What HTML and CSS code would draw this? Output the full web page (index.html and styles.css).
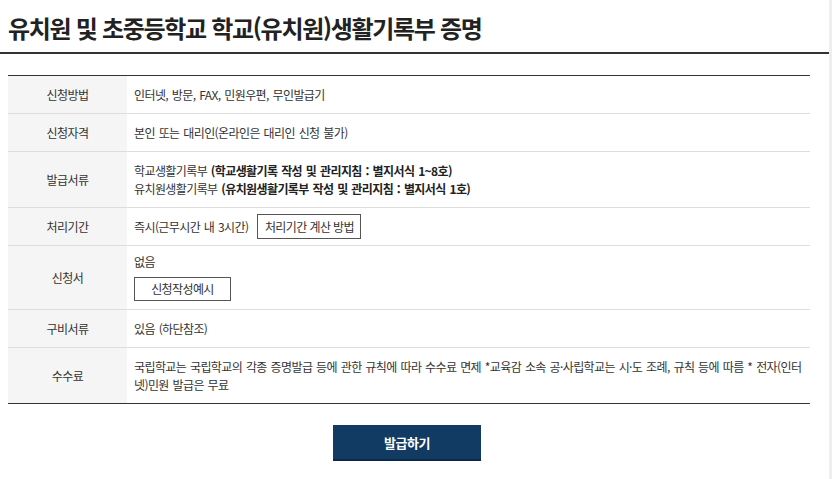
FILE: index.html
```html
<!DOCTYPE html>
<html lang="ko">
<head>
<meta charset="utf-8">
<link rel="stylesheet" href="styles.css">
</head>
<body>
<div class="page">
  <header class="head">
    <h1 class="title">유치원 및 초중등학교 학교(유치원)생활기록부 증명</h1>
  </header>
  <section class="body">
    <table class="info">
      <tr>
        <th>신청방법</th>
        <td>인터넷, 방문, FAX, 민원우편, 무인발급기</td>
      </tr>
      <tr>
        <th>신청자격</th>
        <td>본인 또는 대리인(온라인은 대리인 신청 불가)</td>
      </tr>
      <tr>
        <th>발급서류</th>
        <td>학교생활기록부 <b>(학교생활기록 작성 및 관리지침 : 별지서식 1~8호)</b><br>유치원생활기록부 <b>(유치원생활기록부 작성 및 관리지침 : 별지서식 1호)</b></td>
      </tr>
      <tr>
        <th>처리기간</th>
        <td class="tight"><div class="inline">즉시(근무시간 내 3시간) <span class="btn">처리기간 계산 방법</span></div></td>
      </tr>
      <tr>
        <th>신청서</th>
        <td class="form">없음<div><span class="btn btn2">신청작성예시</span></div></td>
      </tr>
      <tr>
        <th>구비서류</th>
        <td>있음 (하단참조)</td>
      </tr>
      <tr class="last">
        <th>수수료</th>
        <td>국립학교는 국립학교의 각종 증명발급 등에 관한 규칙에 따라 수수료 면제 *교육감 소속 공·사립학교는 시·도 조례, 규칙 등에 따름 * 전자(인터넷)민원 발급은 무료</td>
      </tr>
    </table>
    <div class="actions">
      <span class="issue">발급하기</span>
    </div>
  </section>
</div>
</body>
</html>
```

FILE: styles.css
```css
html, body {
  margin: 0;
  padding: 0;
  background: #fff;
}
body {
  font-family: "Noto Sans CJK KR", "Noto Sans", sans-serif;
  color: #333;
}
.page {
  width: 829px;
  height: 479px;
  border-right: 3px solid #eeeeee;
  overflow: hidden;
}
.head {
  height: 52px;
  border-bottom: 2px solid #333;
  padding: 0 8px;
  display: flex;
  align-items: center;
}
.title {
  margin: 0;
  font-size: 24px;
  font-weight: 700;
  letter-spacing: -1.3px;
  color: #222;
  line-height: 30px;
  padding-top: 3px;
}
.body {
  padding: 21px 19px 0 8px;
}
.info {
  width: 802px;
  border-collapse: collapse;
  border-top: 1px solid #333;
  border-bottom: 1px solid #333;
  font-size: 12px;
  line-height: 18px;
  letter-spacing: -0.6px;
  word-spacing: 1px;
}
.info th {
  width: 119px;
  background: #f5f5f5;
  font-weight: 400;
  color: #333;
  text-align: center;
  vertical-align: middle;
  padding: 9.5px 0;
  border-bottom: 1px solid #ddd;
}
.info td {
  padding: 9.5px 7px;
  border-bottom: 1px solid #ddd;
  color: #333;
  vertical-align: middle;
}
.info tr.last th,
.info tr.last td {
  border-bottom: none;
}
.info b {
  font-weight: 700;
  color: #222;
}
.info td.tight {
  padding-top: 6px;
  padding-bottom: 6px;
}
.inline {
  display: flex;
  align-items: center;
  gap: 9px;
}
.btn {
  display: inline-flex;
  align-items: center;
  justify-content: center;
  box-sizing: border-box;
  height: 25px;
  width: 104px;
  border: 1px solid #555;
  background: #fff;
  color: #333;
  word-spacing: 0;
}
.info td.form {
  padding-top: 7px;
  padding-bottom: 8px;
}
.form div {
  margin-top: 6px;
  line-height: 0;
}
.btn2 {
  width: 97px;
  height: 24px;
  line-height: 18px;
}
.actions {
  width: 798px;
  display: flex;
  justify-content: center;
  margin-top: 21px;
}
.issue {
  display: flex;
  align-items: center;
  justify-content: center;
  box-sizing: border-box;
  width: 148px;
  height: 36px;
  background: #123b64;
  border-bottom: 2px solid #0a2848;
  color: #fff;
  font-size: 13px;
  font-weight: 700;
  letter-spacing: -0.5px;
}
```
